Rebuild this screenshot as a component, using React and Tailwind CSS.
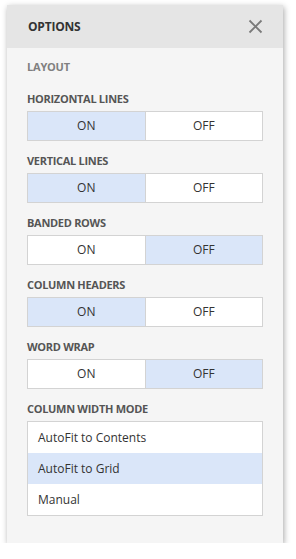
import { useState } from 'react';

const sections = [
  { key: 'hlines', label: 'HORIZONTAL LINES', on: true },
  { key: 'vlines', label: 'VERTICAL LINES', on: true },
  { key: 'banded', label: 'BANDED ROWS', on: false },
  { key: 'headers', label: 'COLUMN HEADERS', on: true },
  { key: 'wrap', label: 'WORD WRAP', on: false },
];

const modes = ['AutoFit to Contents', 'AutoFit to Grid', 'Manual'];

function Toggle({ value, onChange }) {
  return (
    <div className="mt-[4px] flex h-[30px] border border-[#d3d3d3] bg-white">
      <button
        onClick={() => onChange(true)}
        className={`flex-1 text-[12px] text-[#333] ${value ? 'bg-[#dae6f9]' : 'bg-white'}`}
      >
        ON
      </button>
      <div className="w-px bg-[#d3d3d3]" />
      <button
        onClick={() => onChange(false)}
        className={`flex-1 text-[12px] text-[#333] ${!value ? 'bg-[#dae6f9]' : 'bg-white'}`}
      >
        OFF
      </button>
    </div>
  );
}

export default function App() {
  const [opts, setOpts] = useState(
    Object.fromEntries(sections.map((s) => [s.key, s.on]))
  );
  const [mode, setMode] = useState(1);

  return (
    <div className="pl-[7px] pt-[5px]" style={{ fontFamily: '"Open Sans", "Noto Sans", sans-serif' }}>
      <div className="flex h-[538px] w-[276px] flex-col bg-[#f5f5f5] shadow-[1px_2px_6px_rgba(0,0,0,0.35)]">
        {/* Header */}
        <div className="flex h-[43px] items-center justify-between bg-[#e5e5e5] pl-[21px] pr-[20px]">
          <span className="text-[12px] font-bold tracking-[-0.2px] text-[#333]">OPTIONS</span>
          <svg width="15" height="15" viewBox="0 0 15 15" className="text-[#7a7a7a]">
            <path d="M1.5 1.5 L13.5 13.5 M13.5 1.5 L1.5 13.5" stroke="currentColor" strokeWidth="1.8" />
          </svg>
        </div>

        {/* Body */}
        <div className="px-[20px] pt-[11px]">
          <div className="h-[16px] text-[11px] font-bold leading-[16px] tracking-[-0.2px] text-[#808080]">LAYOUT</div>

          <div className="mt-[16px] flex flex-col gap-[12px]">
            {sections.map((s) => (
              <div key={s.key}>
                <div className="h-[16px] text-[11px] font-bold leading-[16px] tracking-[-0.3px] text-[#555]">{s.label}</div>
                <Toggle
                  value={opts[s.key]}
                  onChange={(v) => setOpts((o) => ({ ...o, [s.key]: v }))}
                />
              </div>
            ))}

            <div>
              <div className="h-[16px] text-[11px] font-bold leading-[16px] tracking-[-0.3px] text-[#555]">COLUMN WIDTH MODE</div>
              <div className="mt-[4px] border border-[#d3d3d3] bg-white">
                {modes.map((m, i) => (
                  <div
                    key={m}
                    onClick={() => setMode(i)}
                    className={`flex h-[31px] items-center pl-[10px] text-[12px] text-[#333] ${mode === i ? 'bg-[#dae6f9]' : ''}`}
                  >
                    {m}
                  </div>
                ))}
              </div>
            </div>
          </div>
        </div>
      </div>
    </div>
  );
}
